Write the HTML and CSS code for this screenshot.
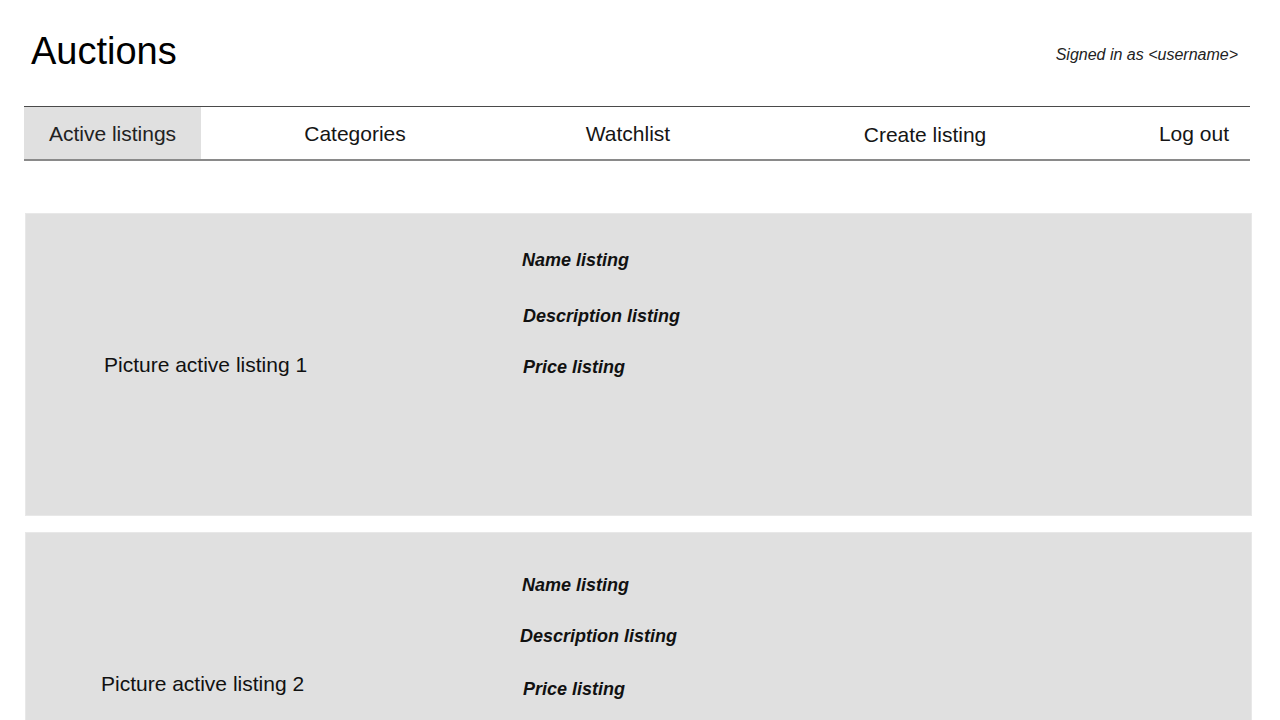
FILE: index.html
```html
<!DOCTYPE html>
<html lang="en">
<head>
<meta charset="utf-8">
<title>Auctions</title>
<link rel="stylesheet" href="styles.css">
</head>
<body>
  <header class="header">
    <h1 class="title">Auctions</h1>
    <div class="signed">Signed in as &lt;username&gt;</div>
  </header>

  <nav class="nav">
    <a class="nav-item nav-item--active">Active listings</a>
    <a class="nav-item">Categories</a>
    <a class="nav-item">Watchlist</a>
    <a class="nav-item nav-item--low">Create listing</a>
    <a class="nav-item nav-item--right">Log out</a>
  </nav>

  <main class="listings">
    <section class="card card--first">
      <div class="picture">Picture active listing 1</div>
      <div class="info">
        <div class="field field--name">Name listing</div>
        <div class="field field--desc">Description listing</div>
        <div class="field field--price">Price listing</div>
      </div>
    </section>
    <section class="card card--second">
      <div class="picture picture--shift">Picture active listing 2</div>
      <div class="info">
        <div class="field field--name">Name listing</div>
        <div class="field field--desc">Description listing</div>
        <div class="field field--price">Price listing</div>
      </div>
    </section>
  </main>
</body>
</html>
```

FILE: styles.css
```css
* {
  box-sizing: border-box;
}

html, body {
  margin: 0;
  padding: 0;
  background: #ffffff;
}

body {
  font-family: "Liberation Sans", Arial, Helvetica, sans-serif;
  color: #111111;
  overflow: hidden;
  height: 720px;
}

.header {
  display: flex;
  justify-content: space-between;
  align-items: flex-start;
  padding: 29px 42px 0 31px;
}

.title {
  margin: 0;
  font-size: 38px;
  line-height: 44px;
  font-weight: normal;
  color: #000000;
}

.signed {
  margin-top: 17px;
  font-size: 16px;
  line-height: 18px;
  font-style: italic;
  color: #222222;
}

.nav {
  display: grid;
  grid-template-columns: 177px 308px 238px 356px 1fr;
  margin: 33px 30px 0 24px;
  border-top: 1px solid #4a4a4a;
  border-bottom: 2px solid #8a8a8a;
}

.nav-item {
  display: block;
  height: 52px;
  padding-top: 2px;
  line-height: 50px;
  font-size: 21px;
  text-align: center;
  color: #151515;
  white-space: nowrap;
}

.nav-item--active {
  background: #e0e0e0;
  color: #222222;
}

.nav-item--low {
  padding-top: 3px;
}

.nav-item--right {
  text-align: right;
  padding-right: 21px;
}

.listings {
  display: flex;
  flex-direction: column;
  gap: 16px;
  margin: 52px 28px 0 25px;
}

.card {
  display: flex;
  height: 303px;
  flex-shrink: 0;
  background: #e0e0e0;
  border: 1px solid #e8e8e8;
}

.picture {
  width: 496px;
  flex-shrink: 0;
  align-self: center;
  padding-left: 78px;
  font-size: 21px;
  line-height: 24px;
  color: #111111;
}

.picture--shift {
  padding-left: 75px;
}

.info {
  display: flex;
  flex-direction: column;
}

.field {
  font-size: 18px;
  line-height: 22px;
  font-weight: bold;
  font-style: italic;
  color: #111111;
  white-space: nowrap;
}

.card--first .info {
  padding-top: 35px;
}

.card--first .field--desc {
  margin-top: 34px;
  margin-left: 1px;
}

.card--first .field--price {
  margin-top: 29px;
  margin-left: 1px;
}

.card--second .info {
  padding-top: 41px;
}

.card--second .field--desc {
  margin-top: 29px;
  margin-left: -2px;
}

.card--second .field--price {
  margin-top: 31px;
  margin-left: 1px;
}
```
